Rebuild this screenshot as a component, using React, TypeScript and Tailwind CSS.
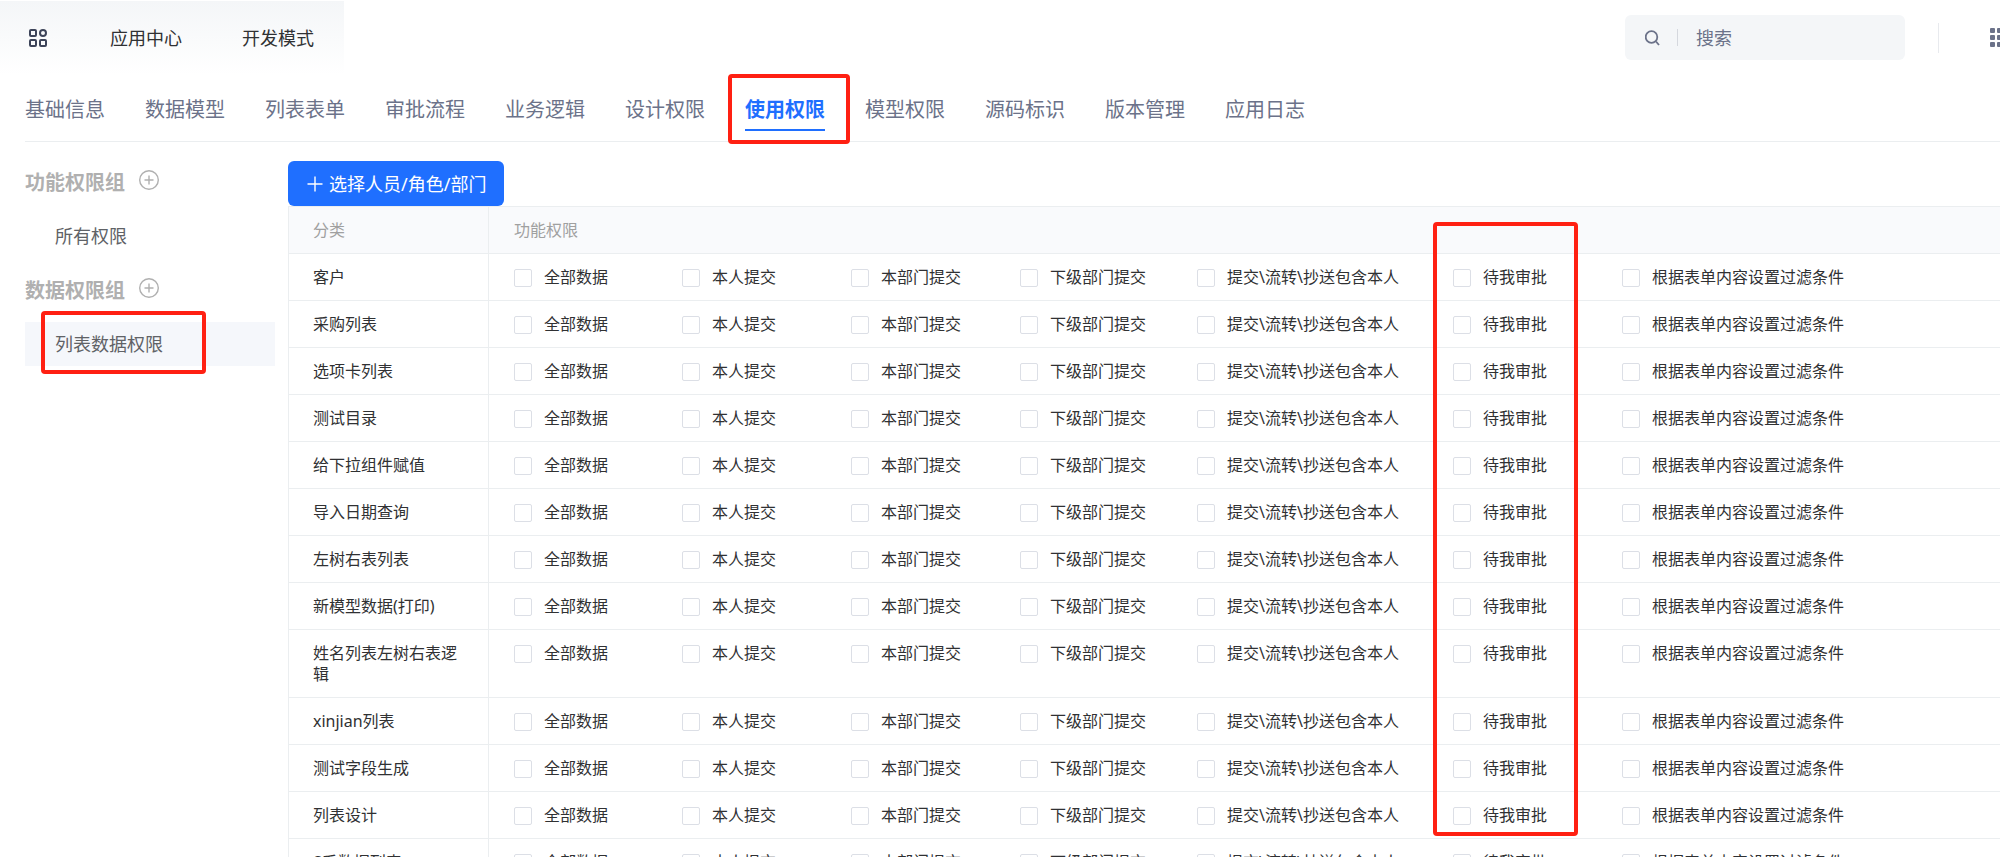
const TABS = [
  "基础信息",
  "数据模型",
  "列表表单",
  "审批流程",
  "业务逻辑",
  "设计权限",
  "使用权限",
  "模型权限",
  "源码标识",
  "版本管理",
  "应用日志",
];

const ACTIVE_TAB = "使用权限";
const MARKED_OPTION = "待我审批";

const ROWS = [
  "客户",
  "采购列表",
  "选项卡列表",
  "测试目录",
  "给下拉组件赋值",
  "导入日期查询",
  "左树右表列表",
  "新模型数据(打印)",
  "姓名列表左树右表逻辑",
  "xinjian列表",
  "测试字段生成",
  "列表设计",
  "S系数据列表",
];

const OPTIONS = [
  "全部数据",
  "本人提交",
  "本部门提交",
  "下级部门提交",
  "提交\\流转\\抄送包含本人",
  MARKED_OPTION,
  "根据表单内容设置过滤条件",
];

function AppsIcon() {
  return (
    <svg
      className="size-5"
      viewBox="0 0 20 20"
      fill="none"
      stroke="#3d4459"
      strokeWidth="2"
    >
      <rect x="2" y="2" width="6" height="6" rx="1" />
      <circle cx="15" cy="5" r="3" />
      <rect x="2" y="12" width="6" height="6" rx="1" />
      <rect x="12" y="12" width="6" height="6" rx="1" />
    </svg>
  );
}

function GridIcon() {
  return (
    <svg className="size-5" viewBox="0 0 20 20" fill="#6b7289">
      {[0, 7, 14].map((y) =>
        [0, 7, 14].map((x) => (
          <rect key={`${x}-${y}`} x={x} y={y} width="5" height="5" rx="1" />
        )),
      )}
    </svg>
  );
}

function Header() {
  return (
    <header className="flex h-[75px] items-start justify-between">
      <nav className="mt-px flex h-[74px] w-[344px] items-start bg-linear-to-b from-[#f4f6f8] to-white pt-[25px] pl-7 text-lg/6 text-[#303133]">
        <button
          type="button"
          aria-label="应用"
          className="flex h-6 w-[82px] items-center"
        >
          <AppsIcon />
        </button>
        <a href="#apps" className="w-[132px]">
          应用中心
        </a>
        <a href="#dev">开发模式</a>
      </nav>
      <div className="flex items-center pt-[15px]">
        <label className="flex h-[45px] w-[280px] items-center rounded-md bg-[#f4f6f8] pl-5">
          <svg
            className="size-4 shrink-0"
            viewBox="0 0 16 16"
            fill="none"
            stroke="#6b7289"
            strokeWidth="1.8"
          >
            <circle cx="6.5" cy="7" r="5.8" />
            <path d="M11 11.5 14 15" />
          </svg>
          <span className="ml-4 h-[17px] w-px shrink-0 bg-[#d5d8de]" />
          <input
            type="text"
            aria-label="搜索"
            placeholder="搜索"
            className="ml-[18px] w-full min-w-0 bg-transparent text-lg/6 outline-none placeholder:text-[#6b7289]"
          />
        </label>
        <span className="ml-[33px] h-[30px] w-px bg-[#e8eaee]" />
        <button
          type="button"
          aria-label="更多"
          className="ml-[51px] w-[10px] overflow-hidden"
        >
          <GridIcon />
        </button>
      </div>
    </header>
  );
}

function Tabs() {
  return (
    <nav className="ml-[25px] flex h-[67px] gap-10 border-b border-[#ebeef0] pt-[21px] text-xl/7 text-[#6b7289]">
      {TABS.map((tab) =>
        tab === ACTIVE_TAB ? (
          <a
            key={tab}
            href="#tab"
            aria-current="page"
            className="relative h-[35px] border-b-2 border-[#1f6fff] font-bold text-[#1f6fff]"
          >
            {tab}
            <span className="pointer-events-none absolute -top-[22px] -right-[25px] -bottom-[15px] -left-[17px] rounded-sm border-4 border-[#ff2012]" />
          </a>
        ) : (
          <a key={tab} href="#tab">
            {tab}
          </a>
        ),
      )}
    </nav>
  );
}

function GroupTitle({ title }: { title: string }) {
  return (
    <div className="flex h-8 items-start gap-[14px]">
      <h2 className="pt-px text-xl/8 font-bold text-[#b0b0b0]">{title}</h2>
      <button type="button" aria-label={`新增${title}`} className="pt-1">
        <svg
          className="size-5"
          viewBox="0 0 20 20"
          fill="none"
          stroke="#b0b0b0"
          strokeWidth="1.4"
        >
          <circle cx="10" cy="10" r="9.3" />
          <path d="M10 5.5v9M5.5 10h9" />
        </svg>
      </button>
    </div>
  );
}

function Sidebar() {
  return (
    <aside className="w-[250px] shrink-0 pt-6 text-lg/6 text-[#606266]">
      <GroupTitle title="功能权限组" />
      <a href="#all" className="mt-4 flex h-11 items-center pl-[30px]">
        所有权限
      </a>
      <div className="mt-4">
        <GroupTitle title="数据权限组" />
      </div>
      <a
        href="#list"
        className="relative mt-4 flex h-11 items-center bg-[#f5f7fb] pl-[30px]"
      >
        列表数据权限
        <span className="pointer-events-none absolute -top-[11px] -bottom-2 left-4 w-[165px] rounded-sm border-4 border-[#ff2012]" />
      </a>
    </aside>
  );
}

function OptionBox({ label }: { label: string }) {
  return (
    <label className="flex items-center gap-3 whitespace-nowrap">
      <input
        type="checkbox"
        className="size-[18px] shrink-0 appearance-none rounded-xs border border-[#dcdfe6] bg-white checked:border-[#1f6fff] checked:bg-[#1f6fff]"
      />
      {label}
    </label>
  );
}

function PermissionTable() {
  return (
    <div className="relative">
      <table className="w-full table-fixed border-separate border-spacing-0 border-t border-l border-[#ebeef0] text-base/[21px] text-[#303133]">
        <colgroup>
          <col className="w-[200px]" />
          <col />
        </colgroup>
        <thead className="bg-[#f9fafc] text-left text-[#a0a0a0]">
          <tr>
            <th className="border-r border-b border-[#ebeef0] pt-[13px] pb-3 pl-6 font-normal">
              分类
            </th>
            <th className="border-b border-[#ebeef0] pt-[13px] pb-3 pl-[25px] font-normal">
              功能权限
            </th>
          </tr>
        </thead>
        <tbody>
          {ROWS.map((row) => (
            <tr key={row} className="align-top">
              <td className="border-r border-b border-[#ebeef0] pt-[13px] pr-6 pb-3 pl-6">
                {row}
              </td>
              <td className="border-b border-[#ebeef0] pt-[13px] pb-3 pl-[25px]">
                <div className="grid grid-cols-[168px_169px_169px_177px_256px_169px_1fr]">
                  {OPTIONS.map((option) => (
                    <OptionBox key={option} label={option} />
                  ))}
                </div>
              </td>
            </tr>
          ))}
        </tbody>
      </table>
      <span className="pointer-events-none absolute top-4 left-[1145px] h-[614px] w-[145px] rounded-sm border-4 border-[#ff2012]" />
    </div>
  );
}

export default function App() {
  return (
    <div className="h-screen overflow-hidden bg-white font-['Noto_Sans','Noto_Sans_CJK_SC',sans-serif]">
      <Header />
      <Tabs />
      <div className="flex gap-[13px] pl-[25px]">
        <Sidebar />
        <main className="min-w-0 flex-1 pt-[19px]">
          <button
            type="button"
            className="flex h-[45px] items-center gap-[6px] rounded-md bg-[#1f6fff] pr-[18px] pl-[19px] text-lg/6 text-white"
          >
            <svg
              className="size-4"
              viewBox="0 0 16 16"
              stroke="currentColor"
              strokeWidth="1.4"
            >
              <path d="M8 0.5v15M0.5 8h15" />
            </svg>
            选择人员/角色/部门
          </button>
          <PermissionTable />
        </main>
      </div>
    </div>
  );
}
